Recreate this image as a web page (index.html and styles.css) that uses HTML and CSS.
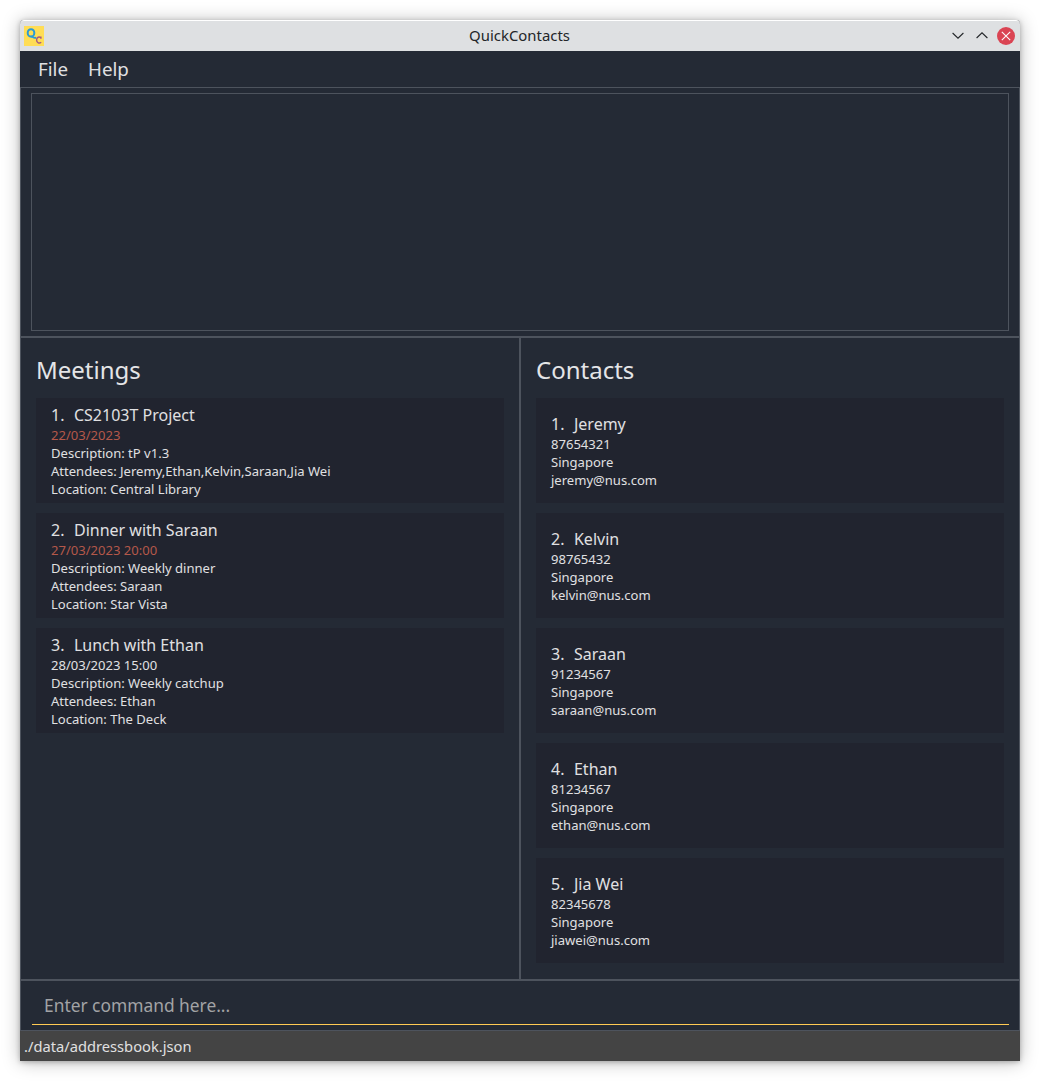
FILE: index.html
```html
<!DOCTYPE html>
<html lang="en">
<head>
<meta charset="utf-8">
<title>QuickContacts</title>
<link rel="stylesheet" href="styles.css">
</head>
<body>
<div class="window">
  <header class="titlebar">
    <svg class="logo" width="20" height="20" viewBox="0 0 20 20">
      <rect width="20" height="20" fill="#ffdd55"/>
      <ellipse cx="7" cy="6.9" rx="3.3" ry="3.7" fill="none" stroke="#2a9ad6" stroke-width="2"/>
      <path d="M6.6 10.3c2 .2 2.8 2.2 5.6 1.3" fill="none" stroke="#2a9ad6" stroke-width="1.7"/>
      <path d="M16.9 12.8v-2.2M16.9 11.8c-1.7-1.5-4.3-.7-4.3 2.3 0 3 2.8 3.7 4.6 2.1" fill="none" stroke="#a35a86" stroke-width="1.4"/>
    </svg>
    <h1 class="title">QuickContacts</h1>
    <div class="controls">
      <svg width="12" height="18" viewBox="0 0 12 18"><path d="M.6 6 6 11.2 11.4 6" fill="none" stroke="#232629" stroke-width="1.1"/></svg>
      <svg width="12" height="18" viewBox="0 0 12 18"><path d="M.6 11 6 5.8l5.4 5.2" fill="none" stroke="#232629" stroke-width="1.1"/></svg>
      <svg width="18" height="18" viewBox="0 0 18 18"><circle cx="9" cy="9" r="9" fill="#da4453"/><path d="M4.8 4.8l8.4 8.4M13.2 4.8l-8.4 8.4" stroke="#fcfcfc" stroke-width="1.1"/></svg>
    </div>
  </header>
  <nav class="menubar"><span>File</span><span>Help</span></nav>
  <section class="result"><div class="result-box"></div></section>
  <main class="lists">
    <section class="panel">
      <h2>Meetings</h2>
      <article class="card">
        <h3><span>1.</span>CS2103T Project</h3>
        <p class="past">22/03/2023</p>
        <p>Description: tP v1.3</p>
        <p>Attendees: Jeremy,Ethan,Kelvin,Saraan,Jia Wei</p>
        <p>Location: Central Library</p>
      </article>
      <article class="card">
        <h3><span>2.</span>Dinner with Saraan</h3>
        <p class="past">27/03/2023 20:00</p>
        <p>Description: Weekly dinner</p>
        <p>Attendees: Saraan</p>
        <p>Location: Star Vista</p>
      </article>
      <article class="card">
        <h3><span>3.</span>Lunch with Ethan</h3>
        <p>28/03/2023 15:00</p>
        <p>Description: Weekly catchup</p>
        <p>Attendees: Ethan</p>
        <p>Location: The Deck</p>
      </article>
    </section>
    <section class="panel">
      <h2>Contacts</h2>
      <article class="card">
        <h3><span>1.</span>Jeremy</h3>
        <p>87654321</p>
        <p>Singapore</p>
        <p>jeremy@nus.com</p>
      </article>
      <article class="card">
        <h3><span>2.</span>Kelvin</h3>
        <p>98765432</p>
        <p>Singapore</p>
        <p>kelvin@nus.com</p>
      </article>
      <article class="card">
        <h3><span>3.</span>Saraan</h3>
        <p>91234567</p>
        <p>Singapore</p>
        <p>saraan@nus.com</p>
      </article>
      <article class="card">
        <h3><span>4.</span>Ethan</h3>
        <p>81234567</p>
        <p>Singapore</p>
        <p>ethan@nus.com</p>
      </article>
      <article class="card">
        <h3><span>5.</span>Jia Wei</h3>
        <p>82345678</p>
        <p>Singapore</p>
        <p>jiawei@nus.com</p>
      </article>
    </section>
  </main>
  <section class="command"><div class="command-field">Enter command here...</div></section>
  <footer class="status">./data/addressbook.json</footer>
</div>
</body>
</html>
```
FILE: styles.css
```css
* { box-sizing: border-box; }
body {
  margin: 0;
  padding: 20px;
  height: 1081px;
  background: #fff;
  font-family: "Noto Sans", sans-serif;
  overflow: hidden;
}
h1, h2, h3, p { margin: 0; font-weight: 400; }
.window {
  display: flex;
  flex-direction: column;
  width: 1000px;
  height: 1041px;
  background: #242a35;
  border-radius: 4px 4px 0 0;
  box-shadow: 0 1px 18px rgba(0, 0, 0, .27), 0 1px 5px rgba(0, 0, 0, .25);
}
.titlebar {
  display: grid;
  grid-template-columns: 1fr auto 1fr;
  align-items: center;
  height: 31px;
  padding: 0 5px 0 4px;
  background: #dee0e2;
  border-top: 1px solid #fff;
  border-radius: 4px 4px 0 0;
}
.title { padding-bottom: 2px; font-size: 14.9px; line-height: 20px; color: #232629; }
.controls {
  display: flex;
  justify-content: flex-end;
  align-items: center;
  gap: 12px;
}
.controls svg:last-child { margin-left: -3px; }
.menubar {
  display: flex;
  gap: 20px;
  height: 36px;
  padding-left: 18px;
  font-size: 18.75px;
  line-height: 36px;
  color: #e0e0e2;
}
.result {
  height: 250px;
  padding: 5px 10px;
  border: 1px solid #4d535d;
}
.result-box { height: 238px; border: 1px solid #4d535d; }
.lists {
  display: grid;
  grid-template-columns: 1fr 1fr;
  height: 643px;
  border: 1px solid #4d535d;
}
.panel {
  display: flex;
  flex-direction: column;
  gap: 10px;
  padding: 15px;
}
.panel:first-child { border-right: 1px solid #4d535d; }
.panel:last-child { border-left: 1px solid #4d535d; }
.panel h2 { height: 35px; font-size: 24px; line-height: 33px; color: #e4e5e7; }
.card {
  display: flex;
  flex-direction: column;
  justify-content: center;
  height: 105px;
  padding-left: 15px;
  background: #21242f;
  color: #e0e0e2;
}
.card h3 { display: flex; gap: 9.5px; font-size: 16px; line-height: 22px; }
.card p { font-size: 13.05px; line-height: 18px; }
.card .past { color: #b4584a; }
.command {
  height: 51px;
  padding: 5px 10px 5px 11px;
  border: 1px solid #4d535d;
}
.command-field {
  height: 39px;
  padding-left: 12px;
  border-bottom: 1px solid #ffca53;
  font-size: 17.38px;
  line-height: 39px;
  color: #a2a3a5;
}
.status {
  height: 30px;
  padding-left: 4px;
  background: #444;
  font-size: 14.7px;
  line-height: 31px;
  color: #e0e0e0;
}
```
